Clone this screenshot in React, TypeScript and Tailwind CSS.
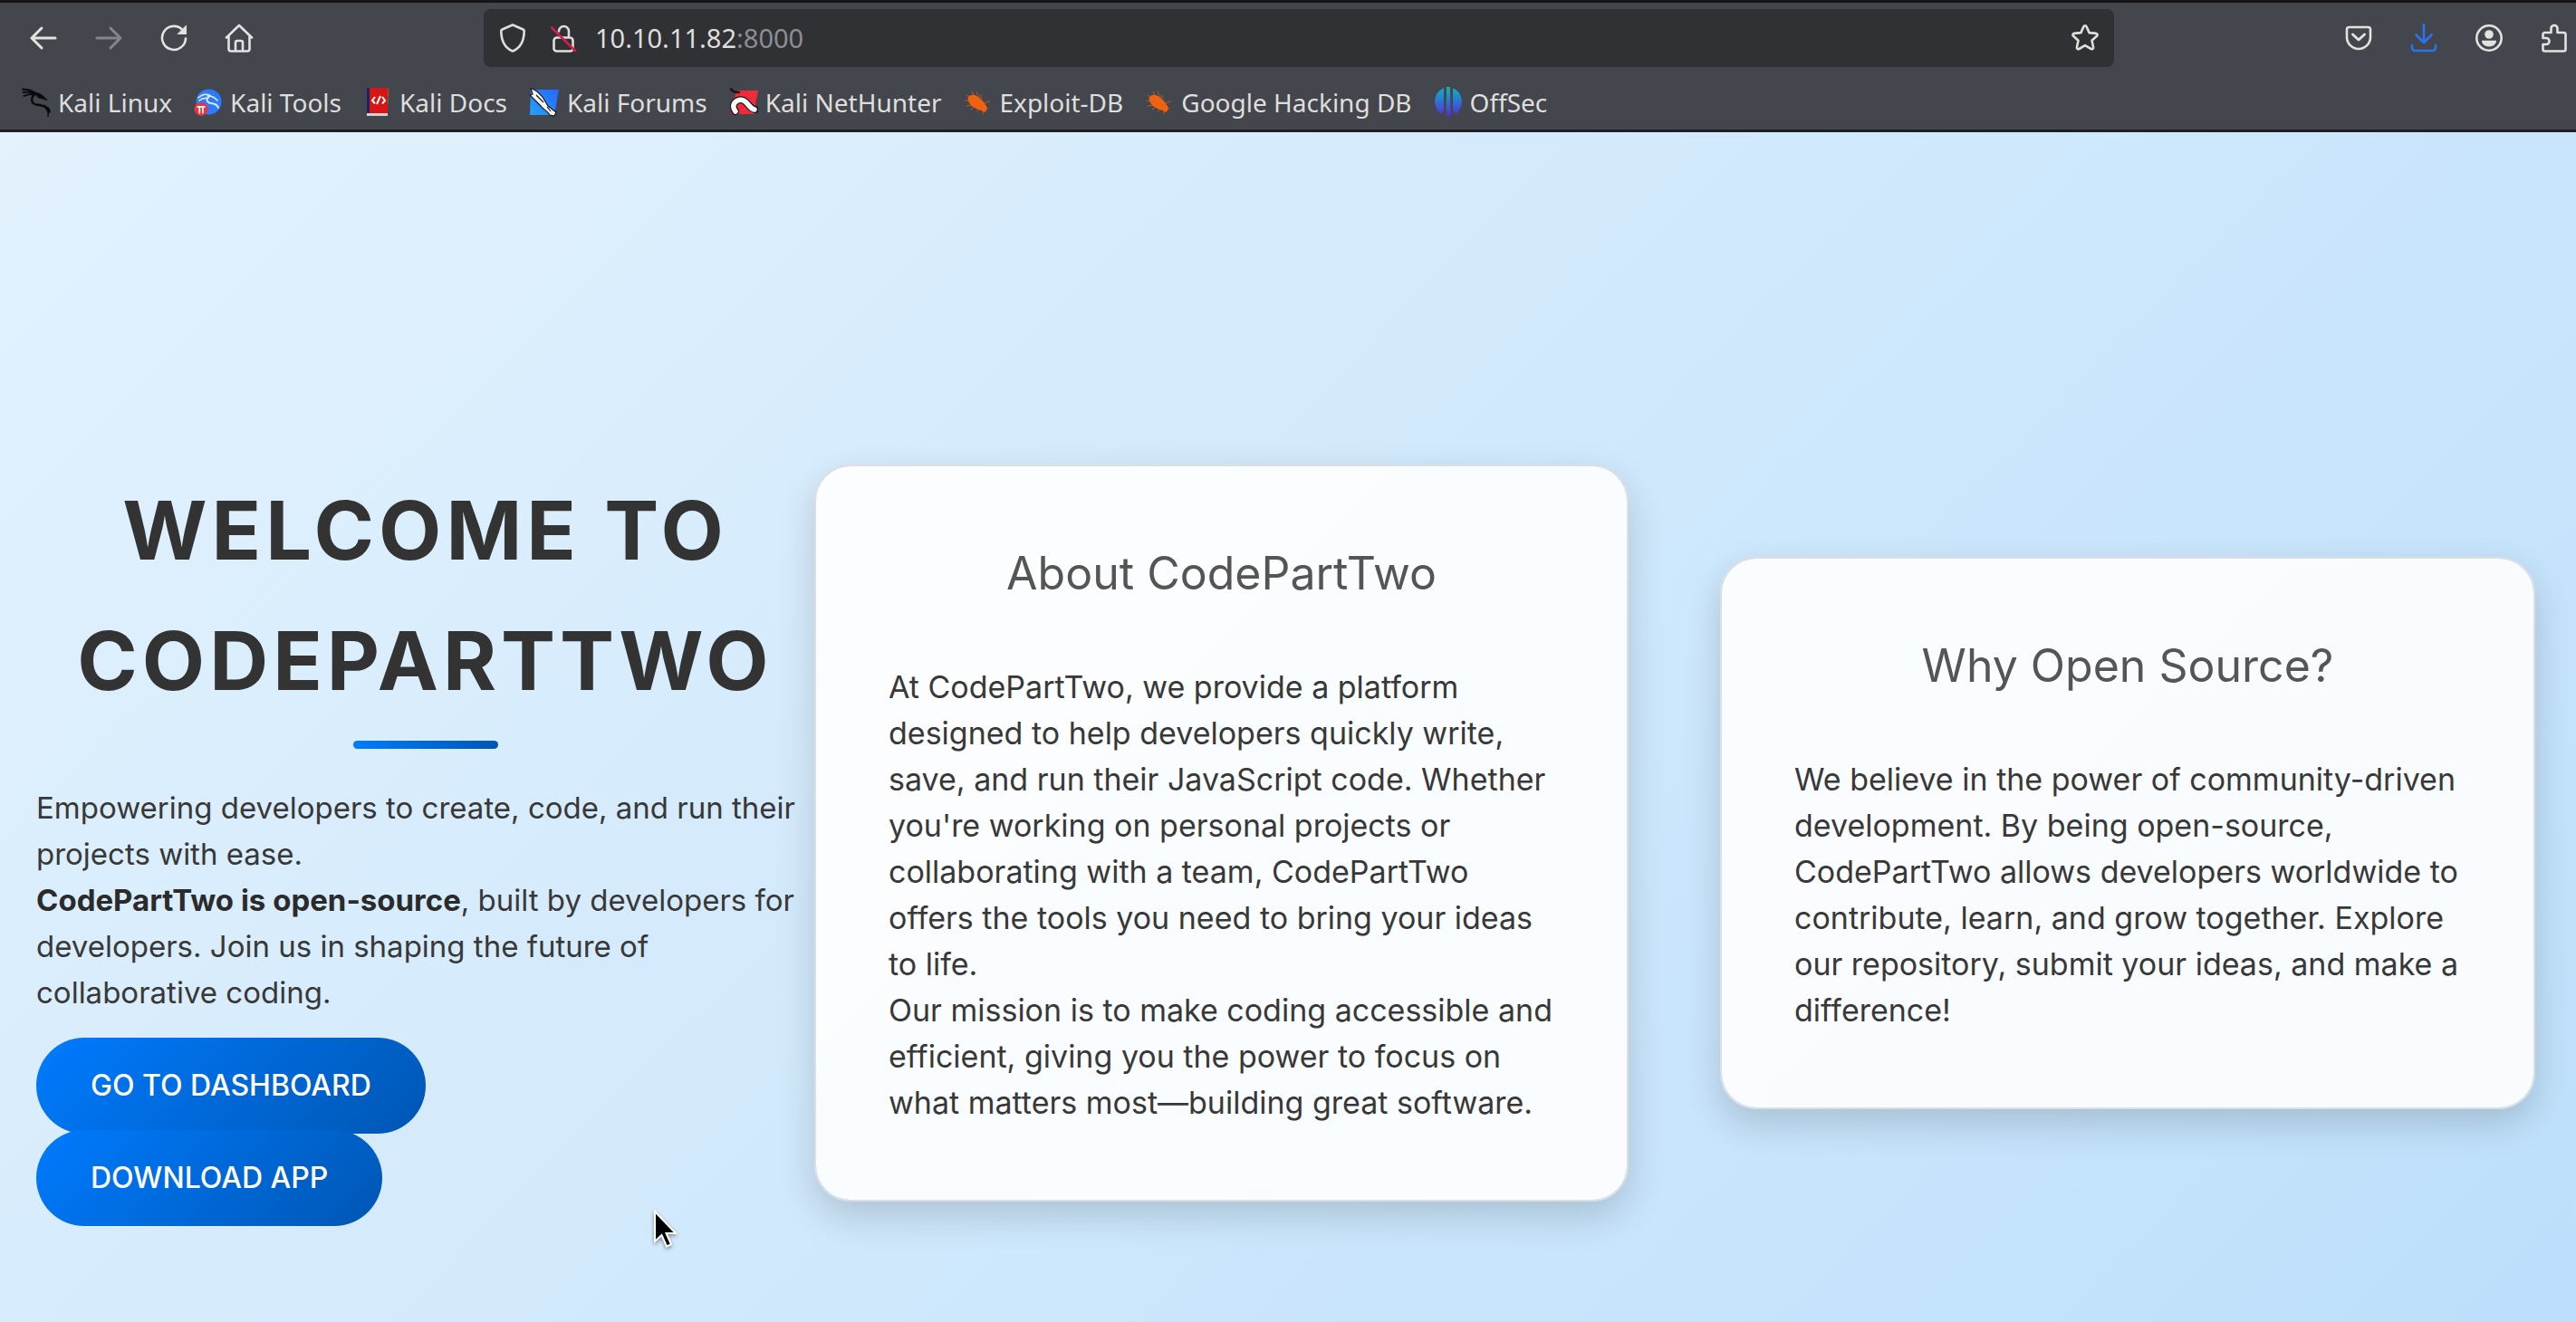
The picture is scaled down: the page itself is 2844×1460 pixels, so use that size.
import type { ReactNode } from "react";

function IconButton({ label, children }: { label: string; children: ReactNode }) {
  return (
    <button
      type="button"
      aria-label={label}
      className="flex h-16 w-18 shrink-0 items-center justify-center text-[#e2e2df]"
    >
      {children}
    </button>
  );
}

const line = {
  width: 32,
  height: 32,
  viewBox: "0 0 32 32",
  fill: "none",
  stroke: "currentColor",
  strokeWidth: 2.6,
  strokeLinecap: "round",
  strokeLinejoin: "round",
} as const;

const BackIcon = () => (
  <svg {...line} strokeWidth={3}>
    <path d="M29 16H3M14 5 3 16l11 11" />
  </svg>
);
const ForwardIcon = () => (
  <svg {...line} strokeWidth={3} className="text-[#85868a]">
    <path d="M3 16h26M18 5l11 11-11 11" />
  </svg>
);
const ReloadIcon = () => (
  <svg {...line}>
    <path d="M29 16.500A13 13 0 1 1 25 6.500" />
    <path d="M29.500 2.500v9h-9z" fill="currentColor" strokeWidth={1} />
  </svg>
);
const HomeIcon = () => (
  <svg {...line}>
    <path d="M2 15.500 16 2l14 13.500M4.500 14v14a2.500 2.500 0 0 0 2.500 2.500h18a2.500 2.500 0 0 0 2.500-2.500V14" />
    <path d="M12 30V21a2 2 0 0 1 2-2h4a2 2 0 0 1 2 2v9" />
  </svg>
);
const ShieldIcon = () => (
  <svg {...line}>
    <path d="M16 1.500 27.500 6.500a2 2 0 0 1 1.200 2C28.500 18 26 26.500 16 30.500 6 26.500 3.500 18 3.300 8.500a2 2 0 0 1 1.200-2z" />
  </svg>
);
const InsecureIcon = () => (
  <svg {...line}>
    <path d="M11 8.500a5.500 5.500 0 0 1 11 0V14M9 15.500h14a3.500 3.500 0 0 1 3.500 3.500v8.500a3 3 0 0 1-3 3H8.500a3 3 0 0 1-3-3V19A3.500 3.500 0 0 1 9 15.500" />
    <path d="M3 4.500 29 30" stroke="#cf1f4a" />
  </svg>
);
const StarIcon = () => (
  <svg {...line}>
    <path d="M16 2.200c.8 0 1.300.5 1.600 1.200l3 6.700 7.400.8c1.600.2 2.100 1.900 1 2.900l-5.500 5 1.600 7.400c.3 1.500-1.200 2.500-2.500 1.800L16 24.200 9.400 28c-1.300.7-2.800-.3-2.500-1.800l1.600-7.400-5.500-5c-1.100-1-.6-2.700 1-2.900l7.400-.8 3-6.700c.3-.7.800-1.200 1.600-1.200z" />
  </svg>
);
const PocketIcon = () => (
  <svg {...line}>
    <path d="M5.500 4h21A2.500 2.500 0 0 1 29 6.500V15a13 13 0 0 1-26 0V6.500A2.500 2.500 0 0 1 5.500 4z" />
    <path d="m9.500 12 6.500 6 6.500-6" strokeWidth={3} />
  </svg>
);
const DownloadIcon = () => (
  <svg {...line} className="text-[#2b72f0]">
    <path d="M16 1v20M7.500 12.500 16 21l8.500-8.500M3 24v2.500A3.500 3.500 0 0 0 6.500 30h19a3.500 3.500 0 0 0 3.500-3.500V24" />
  </svg>
);
const AccountIcon = () => (
  <svg {...line}>
    <circle cx="16" cy="16" r="13.700" />
    <circle cx="16" cy="12" r="4.800" fill="currentColor" stroke="none" />
    <path d="M8 18.800h16c0 4-3.500 6.700-8 6.700s-8-2.700-8-6.700z" fill="currentColor" stroke="none" />
  </svg>
);
const PuzzleIcon = () => (
  <svg {...line}>
    <path d="M12.500 10V5.500a3.500 3.500 0 0 1 7 0V10h7a2 2 0 0 1 2 2v16.500a2 2 0 0 1-2 2H5.500a2 2 0 0 1-2-2V23H7a3.500 3.500 0 0 0 0-7H3.500v-4a2 2 0 0 1 2-2z" />
  </svg>
);

const DragonIcon = () => (
  <svg width="32" height="32" viewBox="0 0 32 32" fill="none" stroke="#08090b" strokeLinecap="round">
    <path d="M1 1.500c6 .2 10.500 1.500 14 4.500M1.500 5c5-1 9-.2 12 1.500M2.500 9c4-2 7-2.500 10-1.500" strokeWidth="1.800" />
    <path d="M13 5c5 .2 10 2.500 15 8.500-4-1.500-6-2-9-2.500z" fill="#08090b" strokeWidth="1" />
    <path d="M15 7C9.500 10 10 17.500 16 18.500c6 .8 11 1.500 13 7" strokeWidth="2.400" />
    <path d="M25 19.500c4 3 5 6.500 4 11.500M28 21.500c2 1 3 3.500 3 5.500" strokeWidth="1.600" />
  </svg>
);
const ToolsIcon = () => (
  <svg width="32" height="32" viewBox="0 0 32 32" fill="none" strokeLinecap="round">
    <circle cx="16.500" cy="15.500" r="14" fill="#2b7bfb" />
    <path d="M5 11c4-4 9-4.500 13-2.500M6 14c3-2.500 6-3 9-2.500M15 9c5-.5 8 1.500 11 5" stroke="#dcebff" strokeWidth="1.600" />
    <path d="M17 10c-4 2-3 6.500 2 7 4 .4 7 1 8 5" stroke="#dcebff" strokeWidth="1.900" />
    <circle cx="8" cy="23.500" r="7.500" fill="#ee3338" />
    <path d="M4 20.800h8M6.300 21v6.500M9.900 21v6.500" stroke="#fff" strokeWidth="1.800" />
  </svg>
);
const DocsIcon = () => (
  <svg width="32" height="32" viewBox="0 0 32 32" fill="none">
    <path d="M4 0h3v28H4z" fill="#1b2460" />
    <path d="M26 1h2v9h-2z" fill="#a8562a" />
    <path d="M26 11h2v7h-2z" fill="#2c7a52" />
    <path d="M7 0h20v28H7z" fill="#d81516" />
    <path d="M4 28h23v3H4z" fill="#d6d0d2" />
    <path d="m13 10-3 4 3 3.500M21 10l3 4-3 3.500M19 9l-4 9" stroke="#fff" strokeWidth="2" />
  </svg>
);
const ForumsIcon = () => (
  <svg width="34" height="32" viewBox="0 0 34 32">
    <defs>
      <linearGradient id="forum" x1="1" y1="0" x2="0" y2="1">
        <stop stopColor="#2766fa" />
        <stop offset="1" stopColor="#22a2ff" />
      </linearGradient>
    </defs>
    <path d="M2 2h31l-5 28H1z" fill="url(#forum)" />
    <path d="M2 0l7 4 6 6 6 10 9 7-2 4-5-1c-3-5-7-6-10-10L1 8l3-1z" fill="#f6f6f2" stroke="#17181b" strokeWidth="1.200" />
    <path d="m8 8 8 8M20 21l4 5" stroke="#17181b" strokeWidth="1.200" />
  </svg>
);
const NetHunterIcon = () => (
  <svg width="32" height="32" viewBox="0 0 32 32" fill="none" strokeLinecap="round">
    <path d="M9 3h23l-5 26H1l2-12z" fill="#ef2b3a" />
    <path d="M1 22h8v7H1z" fill="#b0104a" />
    <path d="M7 26C1 18 9 11 16 14c6 3 6 9 13 10" stroke="#17181b" strokeWidth="8" />
    <path d="M7 26C1 18 9 11 16 14c6 3 6 9 12 10" stroke="#fbfbfb" strokeWidth="5.500" />
    <path d="M2 1c1 3 4 4 9 4" stroke="#17181b" strokeWidth="2.500" />
  </svg>
);
const BugIcon = () => (
  <svg width="32" height="32" viewBox="0 0 32 32" fill="none" stroke="#b85a2a" strokeWidth="1" strokeLinecap="round">
    <path d="M9 4l3 6M14 4l3 6M3 8l5 4M2 14l5 1M3 20l6-1M8 24l4-3M15 26l2-4M21 29l1-5M19 8l0 6M29 15l-7 2M27 23l-5-2" />
    <path d="M5 10c4-4 10-2 14 3 3 2 4 4 7 9l-2 5c-4-2-13-4-17-9-2-3-3-6-2-8z" fill="#f0620f" stroke="none" />
  </svg>
);
const OffSecIcon = () => (
  <svg width="32" height="34" viewBox="0 0 32 34">
    <defs>
      <linearGradient id="offsec" gradientUnits="userSpaceOnUse" x1="0" y1="0" x2="0" y2="34">
        <stop stopColor="#0fb3b5" />
        <stop offset=".5" stopColor="#2d6fd6" />
        <stop offset="1" stopColor="#6420d8" />
      </linearGradient>
    </defs>
    <path d="M11 1.500v24L8 30C-2 22-1 6 11 1.500zM21 1.500v24l3 4.500C34 22 33 6 21 1.500z" fill="url(#offsec)" />
    <path d="M14 0h4l.5 31-2.500 3-2.500-3z" fill="url(#offsec)" />
  </svg>
);

const bookmarks = [
  { name: "Kali Linux", Icon: DragonIcon },
  { name: "Kali Tools", Icon: ToolsIcon },
  { name: "Kali Docs", Icon: DocsIcon },
  { name: "Kali Forums", Icon: ForumsIcon },
  { name: "Kali NetHunter", Icon: NetHunterIcon },
  { name: "Exploit-DB", Icon: BugIcon },
  { name: "Google Hacking DB", Icon: BugIcon },
  { name: "OffSec", Icon: OffSecIcon },
];

function BrowserBar() {
  return (
    <header className="overflow-hidden border-t-3 border-b-3 border-t-[#15151a] border-b-[#1e1e24] bg-[#44464d] font-['Noto_Sans',sans-serif] text-[28px] text-[#dededb]">
      <div className="-mr-3 flex items-center pt-[7px] pl-3">
        <IconButton label="Back"><BackIcon /></IconButton>
        <IconButton label="Forward"><ForwardIcon /></IconButton>
        <IconButton label="Reload"><ReloadIcon /></IconButton>
        <IconButton label="Home"><HomeIcon /></IconButton>
        <div className="mx-[234px] flex h-16 min-w-0 flex-1 items-center rounded-lg bg-[#303135] px-4 text-[29px]">
          <button type="button" aria-label="Tracking protection" className="mr-6"><ShieldIcon /></button>
          <button type="button" aria-label="Connection is not secure" className="mr-[19px]"><InsecureIcon /></button>
          <input
            aria-label="Address"
            defaultValue="10.10.11.82"
            className="field-sizing-content bg-transparent outline-none"
          />
          <span className="flex-1 text-[#8d8e92]">:8000</span>
          <button type="button" aria-label="Bookmark this page"><StarIcon /></button>
        </div>
        <IconButton label="Save to Pocket"><PocketIcon /></IconButton>
        <IconButton label="Downloads"><DownloadIcon /></IconButton>
        <IconButton label="Account"><AccountIcon /></IconButton>
        <IconButton label="Extensions"><PuzzleIcon /></IconButton>
      </div>
      <nav aria-label="Bookmarks" className="flex h-[69px] items-center gap-6 pt-2 pl-6">
        {bookmarks.map(({ name, Icon }) => (
          <a key={name} href="#" className="flex items-center gap-2 whitespace-nowrap">
            <Icon />
            {name}
          </a>
        ))}
      </nav>
    </header>
  );
}

function Card({ title, children }: { title: string; children: ReactNode }) {
  return (
    <section className="rounded-[40px] border-2 border-[#dcdfe2] bg-white/90 bg-clip-padding px-20 pt-[78px] pb-[82px] shadow-[0_16px_40px_rgba(0,0,0,0.16)]">
      <h2 className="mb-[60px] text-center text-[50px] leading-20 text-[#555]">{title}</h2>
      <div className="whitespace-nowrap">{children}</div>
    </section>
  );
}

const actionClass =
  "flex h-[106px] items-center rounded-full bg-[linear-gradient(135deg,#007bff,#0056b3)] px-[60px] text-[32px] font-medium text-white uppercase";

export default function App() {
  return (
    <div className="flex min-h-screen flex-col overflow-hidden">
      <BrowserBar />
      <main className="relative grid flex-1 grid-cols-[minmax(0,859fr)_minmax(0,899fr)_minmax(0,101fr)_minmax(0,900fr)] items-center bg-[linear-gradient(135deg,#e3f2fd,#bbdefb_106%)] pt-[366px] pr-[45px] pb-[133px] pl-10 font-['Inter',sans-serif] text-[34px] leading-[51px] text-[#383838]">
        <section className="text-[33px]">
          <h1 className="text-center text-[90px] leading-36 font-bold tracking-[5px] text-[#333] uppercase">
            Welcome to
            <br />
            CodePartTwo
          </h1>
          <div className="mx-auto mt-4 mb-10 h-[9px] w-40 rounded-full bg-[linear-gradient(90deg,#007bff,#0056b3)]" />
          <p className="whitespace-nowrap">
            Empowering developers to create, code, and run their
            <br />
            projects with ease.
          </p>
          <p className="whitespace-nowrap">
            <strong className="text-[#2b2b2b]">CodePartTwo is open-source</strong>, built by developers for
            <br />
            developers. Join us in shaping the future of
            <br />
            collaborative coding.
          </p>
          <div className="mt-6 -mb-7 flex flex-col items-start">
            <a href="#" className={actionClass}>Go to Dashboard</a>
            <a href="#" className={actionClass + " -mt-1"}>Download App</a>
          </div>
        </section>
        <Card title="About CodePartTwo">
          <p>
            At CodePartTwo, we provide a platform
            <br />
            designed to help developers quickly write,
            <br />
            save, and run their JavaScript code. Whether
            <br />
            you're working on personal projects or
            <br />
            collaborating with a team, CodePartTwo
            <br />
            offers the tools you need to bring your ideas
            <br />
            to life.
          </p>
          <p>
            Our mission is to make coding accessible and
            <br />
            efficient, giving you the power to focus on
            <br />
            what matters most—building great software.
          </p>
        </Card>
        <div />
        <Card title="Why Open Source?">
          <p>
            We believe in the power of community-driven
            <br />
            development. By being open-source,
            <br />
            CodePartTwo allows developers worldwide to
            <br />
            contribute, learn, and grow together. Explore
            <br />
            our repository, submit your ideas, and make a
            <br />
            difference!
          </p>
        </Card>
        <svg
          aria-hidden="true"
          className="absolute top-[1189px] left-[720px] drop-shadow-[0_2px_2px_rgba(0,0,0,0.4)]"
          width="28"
          height="44"
          viewBox="0 0 28 44"
        >
          <path d="M3 3v33l7.500-7 5.500 12.500 5-2.200L15.500 27H26z" fill="#000" stroke="#fff" strokeWidth="2" />
        </svg>
      </main>
    </div>
  );
}
